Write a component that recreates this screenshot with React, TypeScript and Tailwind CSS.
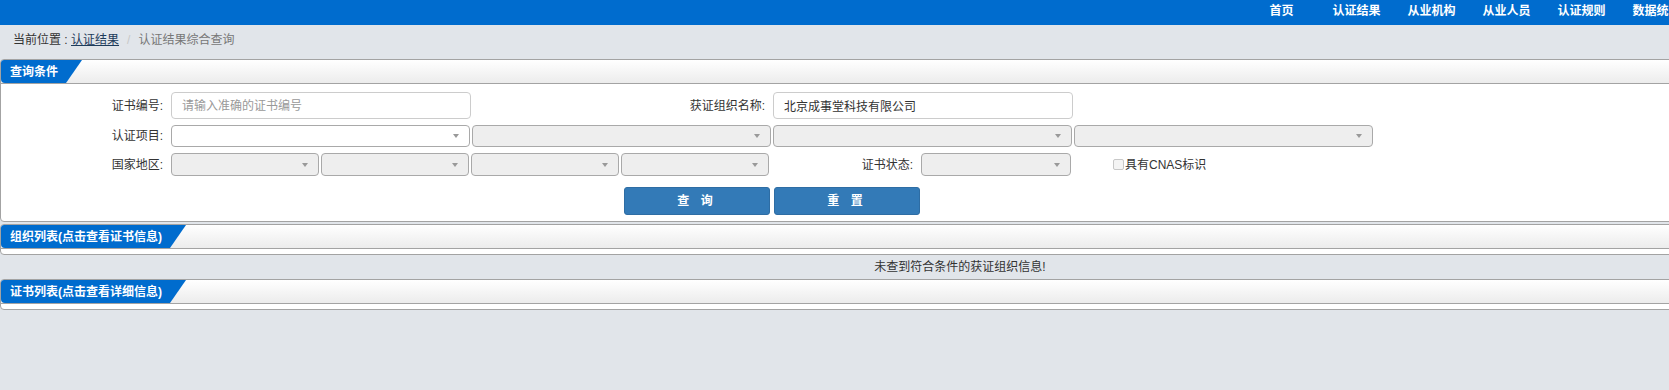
import React from "react";

const navItems = ["首页", "认证结果", "从业机构", "从业人员", "认证规则", "数据统计", "通知公告"];

function Arrow() {
  return (
    <span className="absolute right-[10px] top-1/2 -translate-y-1/2 w-0 h-0 border-x-[3px] border-x-transparent border-t-[4px] border-t-[#999]" />
  );
}

function Select({ w, h, white }: { w: string; h: string; white?: boolean }) {
  return (
    <div
      className={`relative border border-[#a9a9a9] rounded-[4px] ${w} ${h} ${
        white ? "bg-white" : "bg-[#eeeeee]"
      }`}>
      <Arrow />
    </div>
  );
}

function PanelHeader({ title }: { title: string }) {
  return (
    <div className="h-[24px] flex bg-linear-to-b from-white to-[#ececec] border-b border-[#a3a3a3]">
      <div className="h-full bg-[#006cce] text-white font-bold text-[12px] pl-[9px] pr-[24px] flex items-center rounded-bl-[4px] [clip-path:polygon(0_0,100%_0,calc(100%-16px)_100%,0_100%)]">
        {title}
      </div>
    </div>
  );
}

export default function App() {
  return (
    <div className="w-full min-h-screen overflow-hidden bg-[#e1e5ea] text-[#333] font-['Liberation_Sans','Noto_Sans_CJK_SC',sans-serif]">
      <div className="w-[1920px]">
        {/* top nav */}
        <div className="h-[25px] bg-[#006cce] flex justify-end pr-[151px]">
          {navItems.map((t) => (
            <div key={t} className="w-[75px] text-center text-white font-bold text-[12px] leading-[22px]">
              {t}
            </div>
          ))}
        </div>

        {/* breadcrumb */}
        <div className="h-[34px] px-[13px] pb-[4px] flex items-center text-[12px]">
          <span>当前位置 :&nbsp;</span>
          <a className="underline text-[#1d3b5a]">认证结果</a>
          <span className="text-[#c8c8c8] px-[8px]">/</span>
          <span className="text-[#777]">认证结果综合查询</span>
        </div>

        {/* query panel */}
        <div className="border border-[#a3a3a3] rounded-[4px] bg-white overflow-hidden">
          <PanelHeader title="查询条件" />
          <div className="pt-[8px] pb-[6px] text-[12px]">
            <div className="flex items-center h-[27px] mb-[6px]">
              <div className="w-[170px] text-right pr-[8px]">证书编号:</div>
              <input
                className="w-[300px] h-full border border-[#cccccc] rounded-[4px] px-[10px] text-[12px] placeholder:text-[#999] outline-none"
                placeholder="请输入准确的证书编号"
              />
              <div className="w-[302px] text-right pr-[8px]">获证组织名称:</div>
              <input
                className="w-[300px] h-full border border-[#cccccc] rounded-[4px] px-[10px] text-[12px] text-[#333] outline-none"
                defaultValue="北京成事堂科技有限公司"
              />
            </div>

            <div className="flex items-center h-[22px] mb-[6px]">
              <div className="w-[170px] text-right pr-[8px]">认证项目:</div>
              <div className="flex gap-[2px]">
                <Select w="w-[299px]" h="h-[22px]" white />
                <Select w="w-[299px]" h="h-[22px]" />
                <Select w="w-[299px]" h="h-[22px]" />
                <Select w="w-[299px]" h="h-[22px]" />
              </div>
            </div>

            <div className="flex items-center h-[23px]">
              <div className="w-[170px] text-right pr-[8px]">国家地区:</div>
              <div className="flex gap-[2px]">
                <Select w="w-[148px]" h="h-[23px]" />
                <Select w="w-[148px]" h="h-[23px]" />
                <Select w="w-[148px]" h="h-[23px]" />
                <Select w="w-[148px]" h="h-[23px]" />
              </div>
              <div className="w-[152px] text-right pr-[8px]">证书状态:</div>
              <Select w="w-[150px]" h="h-[23px]" />
              <div className="ml-[42px] flex items-center">
                <span className="w-[11px] h-[11px] border border-[#c8c8c8] bg-[#f4f4f4] rounded-[2px]" />
                <span className="ml-[1px]">具有CNAS标识</span>
              </div>
            </div>

            <div className="flex mt-[11px] pl-[170px]">
              <div className="w-[1202px] flex justify-center gap-[4px]">
                <button className="w-[146px] h-[28px] bg-[#337ab7] border border-[#2e6da4] rounded-[3px] text-white font-bold text-[12px] tracking-[4px]">
                  查 询
                </button>
                <button className="w-[146px] h-[28px] bg-[#337ab7] border border-[#2e6da4] rounded-[3px] text-white font-bold text-[12px] tracking-[4px]">
                  重 置
                </button>
              </div>
            </div>
          </div>
        </div>

        {/* org list panel */}
        <div className="mt-[2px] border border-[#a3a3a3] rounded-[4px] bg-white overflow-hidden">
          <PanelHeader title="组织列表(点击查看证书信息)" />
          <div className="h-[5px]" />
        </div>
        <div className="h-[24px] flex items-center justify-center text-[12px]">未查到符合条件的获证组织信息!</div>

        {/* cert list panel */}
        <div className="border border-[#a3a3a3] rounded-[4px] bg-white overflow-hidden">
          <PanelHeader title="证书列表(点击查看详细信息)" />
          <div className="h-[5px]" />
        </div>
      </div>
    </div>
  );
}
